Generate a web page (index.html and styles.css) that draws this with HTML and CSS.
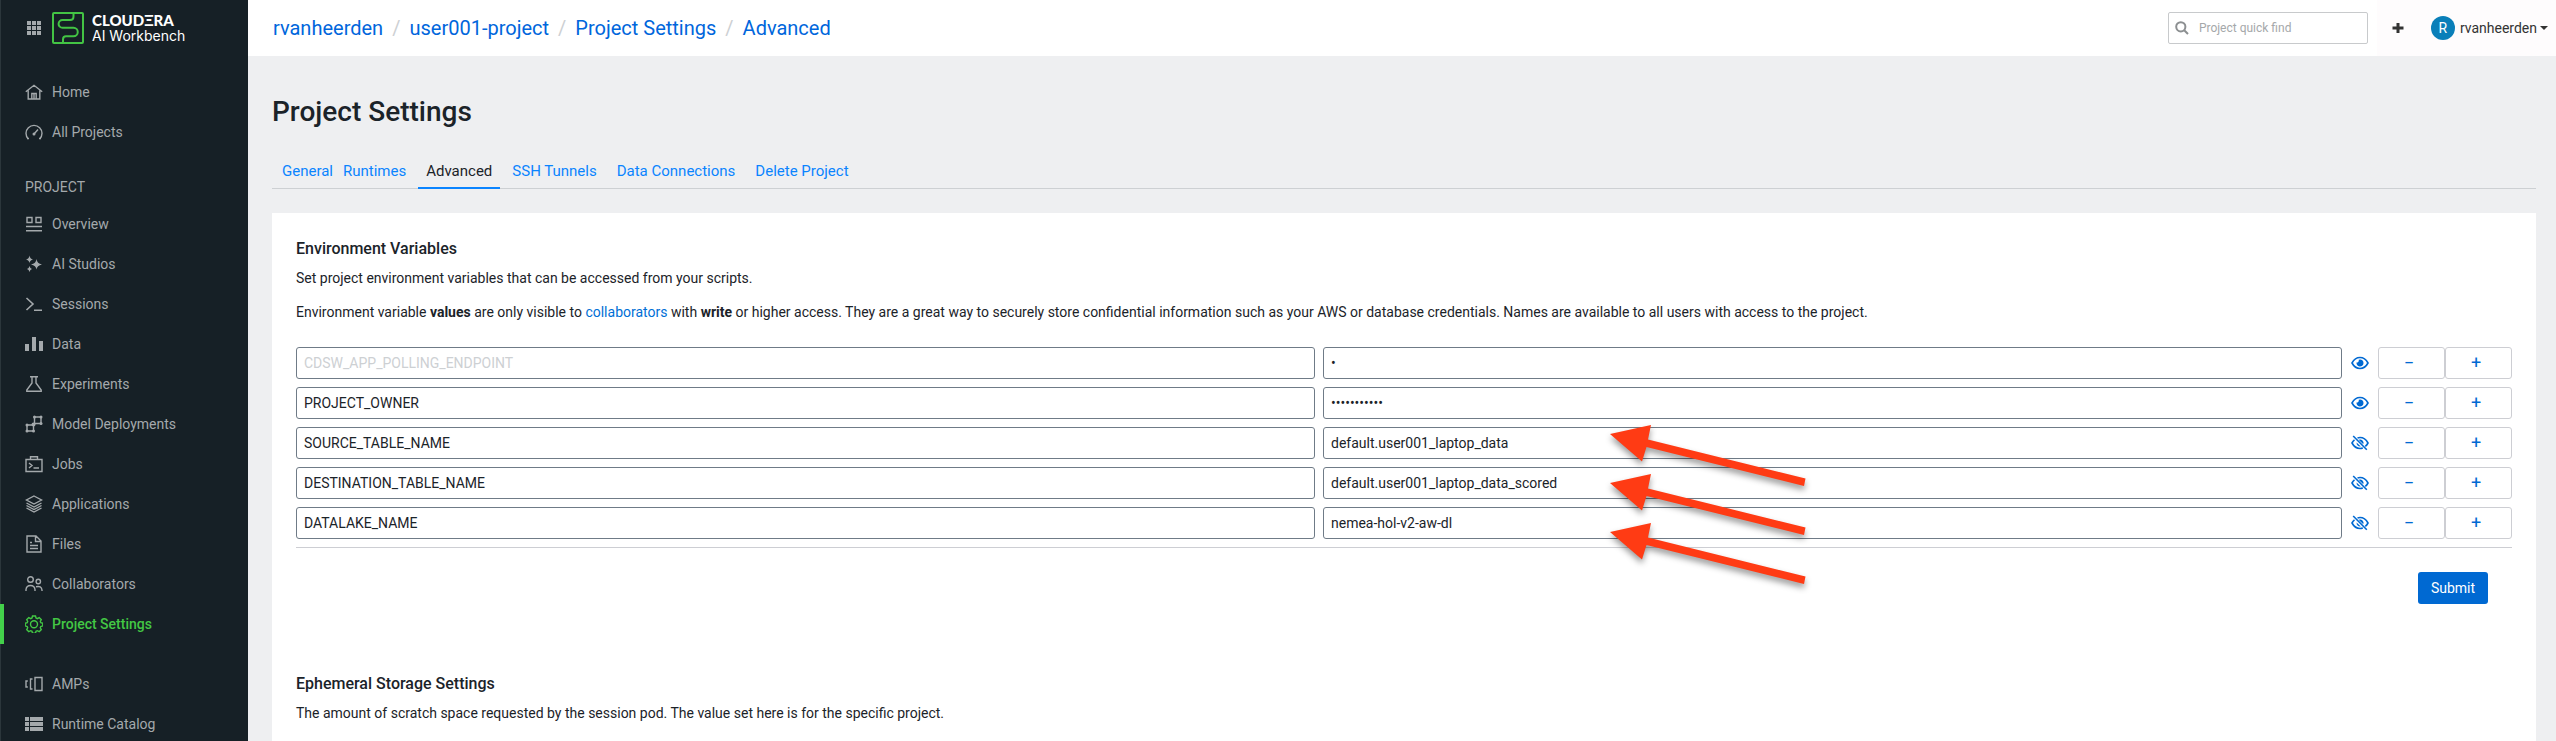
FILE: index.html
```html
<!DOCTYPE html>
<html lang="en">
<head>
<meta charset="utf-8">
<title>Project Settings - Cloudera AI Workbench</title>
<link rel="stylesheet" href="styles.css">
</head>
<body>
<svg class="defs" aria-hidden="true">
  <symbol id="eye" viewBox="0 0 18 14"><path d="M1 7C3 3.300 5.800 1.500 9 1.500S15 3.300 17 7C15 10.700 12.200 12.500 9 12.500S3 10.700 1 7Z" fill="none" stroke="currentColor" stroke-width="1.600"/><path d="M9 3.500A3.500 3.500 0 1 1 5.600 6.200C6.800 6.900 8.300 5.600 7.700 3.800Z" fill="currentColor"/></symbol>
  <symbol id="eye-off" viewBox="0 0 18 16"><path d="M3.500 4.900C2.500 5.700 1.700 6.700 1 8C3 11.700 5.800 13.500 9 13.500C10 13.500 10.900 13.300 11.800 13M6.500 2.900C7.300 2.600 8.100 2.500 9 2.500C12.200 2.500 15 4.300 17 8C16.200 9.500 15.300 10.500 14.300 11.400" fill="none" stroke="currentColor" stroke-width="1.600"/><path d="M7.600 4.800A3.500 3.500 0 0 1 12.300 9.300ZM5.600 7.500L9.800 11.400A3.500 3.500 0 0 1 5.600 7.500Z" fill="currentColor"/><path d="M2.200 1L15.800 14.800" stroke="currentColor" stroke-width="1.600"/></symbol>
</svg>
<div class="app">
  <aside class="sidebar">
    <div class="brand">
      <svg class="grid-icon" viewBox="0 0 14 14" fill="currentColor"><path d="M0 0h4v4H0zM5 0h4v4H5zM10 0h4v4h-4zM0 5h4v4H0zM5 5h4v4H5zM10 5h4v4h-4zM0 10h4v4H0zM5 10h4v4H5zM10 10h4v4h-4z"/></svg>
      <svg class="logo" viewBox="0 0 32 32" fill="none" stroke="#43c444" stroke-width="2"><rect x="1" y="1" width="30" height="30" rx="1"/><path d="M21.500 1V4.500Q21.500 8 18 8H10.500A3.700 3.700 0 0 0 10.500 15.800H21.500A4.200 4.200 0 0 1 21.500 24.300H14Q11 24.300 11 27.500V31"/></svg>
      <div class="brand-text"><span class="brand-name">CLOUDΞRA</span><span class="brand-product">AI Workbench</span></div>
    </div>
    <nav class="nav">
      <a class="nav-item" href="#"><svg viewBox="0 0 18 18"><path d="M.8 8.800L9 2.300l8.200 6.500M3.200 7.500V16h11.600V7.500M6.800 16v-5.500h4.400V16M9 10.500V16"/></svg>Home</a>
      <a class="nav-item" href="#"><svg viewBox="0 0 18 18"><path d="M3.300 16A8 8 0 1 1 14.700 16M2 15.500h2M14 15.500h2M9 11l4-4.500"/><circle class="solid" cx="9" cy="11" r="1.500"/></svg>All Projects</a>
      <h2 class="nav-heading">PROJECT</h2>
      <a class="nav-item" href="#"><svg viewBox="0 0 18 18"><path d="M2 2.500h5v5H2zM11 2.500h5v5h-5zM1 11.500h16M1 15.700h16"/></svg>Overview</a>
      <a class="nav-item" href="#"><svg viewBox="0 0 18 18"><path class="solid" d="M4.500 .5Q5 4 8 4.500Q5 5 4.500 8Q4 5 1 4.500Q4 4 4.500 .5ZM11.500 4Q12 8.500 17 9.500Q12 10.500 11.500 14.500Q11 10.500 6 9.500Q11 8.500 11.500 4ZM4.500 11Q5 13.500 7 14Q5 14.500 4.500 17Q4 14.500 2 14Q4 13.500 4.500 11Z"/></svg>AI Studios</a>
      <a class="nav-item" href="#"><svg viewBox="0 0 18 18"><path d="M1.500 3l6.500 6-6.500 6M9 15.300h8" stroke-width="1.600"/></svg>Sessions</a>
      <a class="nav-item" href="#"><svg viewBox="0 0 18 18"><path class="solid" d="M0 9h4v7H0zM7 2h4v14H7zM14 6h4v10h-4z"/></svg>Data</a>
      <a class="nav-item" href="#"><svg viewBox="0 0 18 18"><path d="M5 1.700h8M7 1.700V8L1.800 15v1.300h14.400V15L11 8V1.700"/></svg>Experiments</a>
      <a class="nav-item" href="#"><svg viewBox="0 0 18 18"><path d="M2 10h6.500v6H2zM9.500 2H16v6.500H9.500zM8.500 10l1-1.500"/><g class="solid"><circle cx="2" cy="10" r="1.500"/><circle cx="8.500" cy="9.500" r="2"/><circle cx="2" cy="16" r="1.500"/><circle cx="8.500" cy="16" r="1.500"/><circle cx="9.500" cy="2" r="1.500"/><circle cx="16" cy="2" r="1.500"/><circle cx="16" cy="8.500" r="1.500"/></g></svg>Model Deployments</a>
      <a class="nav-item" href="#"><svg viewBox="0 0 18 18"><path d="M1 4.500h16v12H1zM5.500 4.500V1.700h7v2.800M4 8l3 2.500L4 13M8.500 13H14"/></svg>Jobs</a>
      <a class="nav-item" href="#"><svg viewBox="0 0 18 18"><path d="M9 1l7.500 4L9 9 1.500 5zM1.500 8L9 12l7.500-4M1.500 10.500l7.500 4 7.500-4M1.500 13L9 17l7.500-4"/></svg>Applications</a>
      <a class="nav-item" href="#"><svg viewBox="0 0 18 18"><path d="M2 1h9l5 5v11H2zM10.500 1v5.500H16M5 7.500h2M5 10.500h8M5 13.500h8"/></svg>Files</a>
      <a class="nav-item" href="#"><svg viewBox="0 0 18 18"><circle cx="5.500" cy="4.500" r="2.800"/><circle cx="13.300" cy="6.500" r="2.200"/><path d="M1 16v-1.500Q1.500 10.500 5.500 10.500T10 14.500V16M11 11.800Q16.500 10.500 17 15v1"/></svg>Collaborators</a>
      <a class="nav-item active" href="#"><svg viewBox="0 0 18 18"><path d="M7.500 1h3l.5 2 1.300.6 1.900-1 2.100 2.100-1 1.800.5 1.200 2 .5v2.700l-2 .6-.5 1.300 1 1.800-2.100 2.100-1.900-1-1.300.6-.5 2h-3L7 16.300l-1.300-.6-1.900 1-2.100-2.100 1-1.800-.5-1.300-2-.6V8.200l2-.5.5-1.200-1-1.800 2.100-2.100 1.900 1L7 3z"/><circle cx="9" cy="9.300" r="3.500"/></svg>Project Settings</a>
      <a class="nav-item spaced" href="#"><svg viewBox="0 0 18 18"><path d="M10 2.500h7v13h-7zM7.500 4H5.500v10h2M2.800 6H1v6h1.800"/></svg>AMPs</a>
      <a class="nav-item" href="#"><svg viewBox="0 0 18 18"><path class="solid" d="M0 2h4v4H0zM5 2h13v4H5zM0 7h4v4H0zM5 7h13v4H5zM0 12h4v4H0zM5 12h13v4H5z"/></svg>Runtime Catalog</a>
    </nav>
  </aside>
  <div class="page">
    <header class="topbar">
      <nav class="breadcrumb" aria-label="Breadcrumb"><a href="#">rvanheerden</a><span>/</span><a href="#">user001-project</a><span>/</span><a href="#">Project Settings</a><span>/</span><a href="#">Advanced</a></nav>
      <label class="search"><svg viewBox="0 0 14 14" fill="none" stroke="currentColor" stroke-width="2"><circle cx="5.800" cy="5.800" r="4.600"/><path d="M9.200 9.200L13 13"/></svg><input type="search" placeholder="Project quick find" aria-label="Project quick find"></label>
      <div class="account">
        <button class="add" aria-label="Create"><svg viewBox="0 0 12 12" fill="currentColor"><path d="M4.500 1h3v3.500H11.500v3H7.500V11h-3V7.500H.5v-3h4z"/></svg></button>
        <button class="user"><span class="avatar">R</span><span>rvanheerden</span><i class="caret"></i></button>
      </div>
    </header>
    <main class="content">
      <h1>Project Settings</h1>
      <nav class="tabs" aria-label="Settings sections"><a class="tight" href="#">General</a><a class="tight" href="#">Runtimes</a><a class="current" href="#">Advanced</a><a href="#">SSH Tunnels</a><a href="#">Data Connections</a><a href="#">Delete Project</a></nav>
      <section class="panel">
        <h2>Environment Variables</h2>
        <p>Set project environment variables that can be accessed from your scripts.</p>
        <p>Environment variable <b>values</b> are only visible to <a href="#">collaborators</a> with <b>write</b> or higher access. They are a great way to securely store confidential information such as your AWS or database credentials. Names are available to all users with access to the project.</p>
        <form class="variables">
          <div class="row"><input aria-label="Name" value="CDSW_APP_POLLING_ENDPOINT" disabled><input type="password" aria-label="Value" value="1"><button type="button" class="reveal" aria-label="Show value"><svg><use href="#eye"/></svg></button><div class="pair"><button type="button">−</button><button type="button">+</button></div></div>
          <div class="row"><input aria-label="Name" value="PROJECT_OWNER"><input type="password" aria-label="Value" value="rvanheerden"><button type="button" class="reveal" aria-label="Show value"><svg><use href="#eye"/></svg></button><div class="pair"><button type="button">−</button><button type="button">+</button></div></div>
          <div class="row"><input aria-label="Name" value="SOURCE_TABLE_NAME"><input aria-label="Value" value="default.user001_laptop_data"><button type="button" class="reveal" aria-label="Hide value"><svg><use href="#eye-off"/></svg></button><div class="pair"><button type="button">−</button><button type="button">+</button></div></div>
          <div class="row"><input aria-label="Name" value="DESTINATION_TABLE_NAME"><input aria-label="Value" value="default.user001_laptop_data_scored"><button type="button" class="reveal" aria-label="Hide value"><svg><use href="#eye-off"/></svg></button><div class="pair"><button type="button">−</button><button type="button">+</button></div></div>
          <div class="row"><input aria-label="Name" value="DATALAKE_NAME"><input aria-label="Value" value="nemea-hol-v2-aw-dl"><button type="button" class="reveal" aria-label="Hide value"><svg><use href="#eye-off"/></svg></button><div class="pair"><button type="button">−</button><button type="button">+</button></div></div>
          <div class="actions"><button class="submit">Submit</button></div>
          <svg class="arrows" viewBox="0 0 210 180" fill="#ff3b14" aria-hidden="true">
            <path id="arrow" d="M5 12L46 3 43 17.500 200.500 56.500 199 64 41.500 25 37 39.500Z"/>
            <use href="#arrow" y="49"/>
            <use href="#arrow" y="98"/>
          </svg>
        </form>
        <h2>Ephemeral Storage Settings</h2>
        <p>The amount of scratch space requested by the session pod. The value set here is for the specific project.</p>
      </section>
    </main>
  </div>
</div>
</body>
</html>
```
FILE: styles.css
```css
* { box-sizing: border-box; }
body { margin: 0; height: 100vh; overflow: hidden; background: #eeeff1; color: #1b2329; font: 14px/20px Roboto, sans-serif; }
button, input { font: inherit; color: inherit; }
button { padding: 0; border: 0; background: none; }
a { color: #006fd6; text-decoration: none; }
h1, h2, p { margin: 0; }
.defs { display: none; }
.app { display: flex; min-height: 100%; }

.sidebar { flex: 0 0 248px; border-left: 1px solid #2b363b; background: #162026; color: #a4a9ac; }
.brand { display: flex; align-items: center; height: 56px; padding-left: 26px; }
.grid-icon { width: 14px; height: 14px; }
.logo { width: 32px; height: 32px; margin: 0 8px 0 11px; }
.brand-text { display: flex; flex-direction: column; color: #fff; }
.brand-name { font: 900 15px/16px Lato, sans-serif; }
.brand-product { font: 14px/16px Inter, sans-serif; }
.nav { padding-top: 16px; }
.nav-item { display: flex; align-items: center; gap: 9px; height: 40px; margin-left: -1px; padding: 0 0 1px 25px; color: inherit; }
.nav-item svg { width: 18px; height: 18px; fill: none; stroke: currentColor; stroke-width: 1.400; }
.nav-item .solid { fill: currentColor; stroke: none; }
.nav-heading { padding: 25px 24px 7px; font-size: 14px; line-height: 20px; font-weight: 400; }
.nav-item.active { padding-left: 21px; border-left: 4px solid #43d14b; color: #43c744; font-weight: 500; }
.nav-item.spaced { margin-top: 20px; }

.page { flex: 1; min-width: 0; }
.topbar { display: flex; align-items: center; height: 56px; background: #fff; }
.breadcrumb { display: flex; flex: 1; gap: 9px; padding-left: 25px; font-size: 20px; line-height: 28px; color: #cdd0d3; }
.breadcrumb a { color: #0066dc; }
.search { display: flex; align-items: center; gap: 8px; width: 200px; height: 32px; padding: 0 6px; margin-right: 9px; border: 1px solid #c8cacc; border-radius: 2px; color: #8c8f91; }
.search svg { flex: none; width: 14px; height: 14px; }
.search input { width: 100%; padding: 0 2px; border: 0; outline: 0; font-size: 12px; }
.search input::placeholder { color: #a5a8aa; }
.account { display: flex; align-items: center; height: 100%; padding: 0 8px 0 15px; background: #fefcfd; color: #333; }
.add, .add svg { display: block; width: 12px; height: 12px; }
.user { display: flex; align-items: center; margin-left: 27px; }
.avatar { width: 24px; height: 24px; margin-right: 5px; border-radius: 50%; background: #0a7fb9; color: #fff; line-height: 24px; }
.caret { margin-left: 3px; border: 4px solid transparent; border-top-color: #333; border-bottom: 0; }

.content { padding: 38px 20px 0 24px; }
h1 { font-size: 28px; line-height: 36px; font-weight: 500; }
.tabs { display: flex; height: 39px; margin-top: 20px; padding-left: 5px; border-bottom: 1px solid #cdd0d3; font-size: 15px; line-height: 20px; }
.tabs a { height: 39px; padding: 11px 8px 0; margin-right: 4px; color: #0a84ff; }
.tabs a.tight { padding: 11px 5px 0; margin-right: 0; }
.tabs a.current { margin-left: 7px; border-bottom: 2px solid #0a84ff; color: #1b2329; }
.panel { margin-top: 24px; padding: 24px 24px 40px; background: #fff; }
.panel h2 { font-size: 16px; line-height: 24px; font-weight: 500; }
.panel p { margin: 7px 0 14px; }
.panel b { font-weight: 700; }

.variables { position: relative; margin: 25px 0 68px; }
.row { display: flex; margin-bottom: 8px; }
.row input { flex: 1; min-width: 0; height: 32px; padding: 0 7px 1px; border: 1px solid #6f7b87; border-radius: 3px; outline: 0; background: #fff; }
.row input + input { margin-left: 8px; }
.row input:disabled { color: #cdd0d3; }
.reveal { display: grid; place-items: center; width: 36px; color: #0069d2; }
.reveal svg { width: 18px; height: 16px; }
.pair { display: flex; width: 134px; }
.pair button { flex: 1; height: 32px; padding-right: 5px; border: 1px solid #cdced3; border-radius: 3px; color: #0069d2; font-size: 18px; }
.actions { display: flex; justify-content: flex-end; padding: 24px 24px 0; border-top: 1px solid #cdced3; }
.submit { width: 70px; height: 32px; border-radius: 3px; background: #0069d2; color: #fff; }
.arrows { position: absolute; left: 1309px; top: 75px; width: 210px; height: 180px; filter: drop-shadow(0 4px 3px rgb(0 0 0 / 40%)); pointer-events: none; }
```
